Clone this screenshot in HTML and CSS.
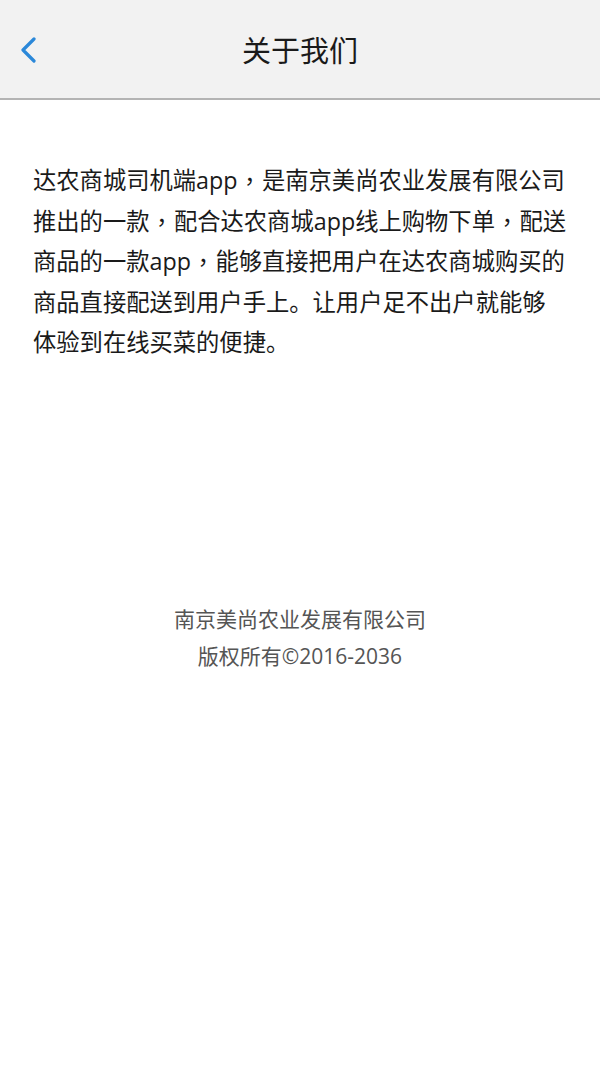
FILE: index.html
```html
<!DOCTYPE html>
<html lang="zh-CN">
<head>
<meta charset="utf-8">
<title>关于我们</title>
<link rel="stylesheet" href="styles.css">
</head>
<body>
<header class="topbar">
  <a class="back" href="#" aria-label="返回">
    <svg width="18" height="26" viewBox="0 0 18 26"><path d="M15 2 L4 13 L15 24" fill="none" stroke="#2b88d9" stroke-width="3.2" stroke-linecap="round" stroke-linejoin="round"/></svg>
  </a>
  <h1 class="title">关于我们</h1>
</header>
<main class="content">
  <p class="intro">达农商城司机端app<span class="pc" lang="zh-TW">，</span>是南京美尚农业发展有限公司推出的一款<span class="pc" lang="zh-TW">，</span>配合达农商城app线上购物下单<span class="pc" lang="zh-TW">，</span>配送商品的一款app<span class="pc" lang="zh-TW">，</span>能够直接把用户在达农商城购买的商品直接配送到用户手上。让用户足不出户就能够体验到在线买菜的便捷。</p>
</main>
<footer class="footer">
  <p>南京美尚农业发展有限公司</p>
  <p>版权所有©2016-2036</p>
</footer>
</body>
</html>
```
FILE: styles.css
```css
html, body {
  margin: 0;
  padding: 0;
  background: #ffffff;
  font-family: "Open Sans", "Noto Sans CJK SC", sans-serif;
}
.topbar {
  height: 98px;
  background: #f2f2f2;
  border-bottom: 2px solid #b4b4b4;
  display: flex;
  align-items: center;
  justify-content: center;
  position: relative;
}
.back {
  position: absolute;
  left: 19px;
  top: 37px;
  display: block;
  width: 18px;
  height: 26px;
}
.back svg { display: block; }
.title {
  margin: 0;
  font-size: 29px;
  font-weight: normal;
  color: #1a1a1a;
  line-height: 1;
  font-family: "Noto Sans CJK SC", sans-serif;
}
.content {
  padding: 60px 33px 0 33px;
}
.intro {
  margin: 0;
  font-size: 23.3px;
  line-height: 40.5px;
  color: #1a1a1a;
  text-spacing-trim: space-all;
}
.pc {
  display: inline-block;
  width: 1.05em;
  text-align: center;
  font-family: "Noto Sans CJK TC", sans-serif;
  line-height: 40.5px;
  vertical-align: top;
}
.footer {
  margin-top: 238px;
  text-align: center;
  color: #555555;
  font-size: 21px;
  line-height: 37px;
}
.footer p { margin: 0; }
```
